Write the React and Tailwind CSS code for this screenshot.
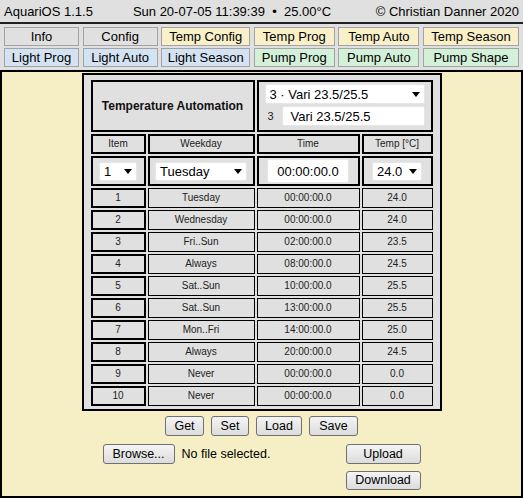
import React from "react";

const navRows = [
  [
    ["Info", "bg-[#e0e0e0]", "w-[75px]"],
    ["Config", "bg-[#e0e0e0]", "w-[75px]"],
    ["Temp Config", "bg-[#f9f0c9]", "w-[89px]"],
    ["Temp Prog", "bg-[#f9f0c9]", "w-[81px]"],
    ["Temp Auto", "bg-[#f9f0c9]", "w-[81px]"],
    ["Temp Season", "bg-[#f9f0c9]", "w-[96px]"],
  ],
  [
    ["Light Prog", "bg-[#d3e3f3]", "w-[75px]"],
    ["Light Auto", "bg-[#d3e3f3]", "w-[75px]"],
    ["Light Season", "bg-[#d3e3f3]", "w-[89px]"],
    ["Pump Prog", "bg-[#d3f1d9]", "w-[81px]"],
    ["Pump Auto", "bg-[#d3f1d9]", "w-[81px]"],
    ["Pump Shape", "bg-[#d3f1d9]", "w-[96px]"],
  ],
];

const rows = [
  ["1", "Tuesday", "00:00:00.0", "24.0"],
  ["2", "Wednesday", "00:00:00.0", "24.0"],
  ["3", "Fri..Sun", "02:00:00.0", "23.5"],
  ["4", "Always", "08:00:00.0", "24.5"],
  ["5", "Sat..Sun", "10:00:00.0", "25.5"],
  ["6", "Sat..Sun", "13:00:00.0", "25.5"],
  ["7", "Mon..Fri", "14:00:00.0", "25.0"],
  ["8", "Always", "20:00:00.0", "24.5"],
  ["9", "Never", "00:00:00.0", "0.0"],
  ["10", "Never", "00:00:00.0", "0.0"],
];

function Arrow() {
  return (
    <svg width="8" height="5" viewBox="0 0 8 5" className="shrink-0">
      <polygon points="0,0 8,0 4,5" fill="#000" />
    </svg>
  );
}

function Select({ text, w }) {
  return (
    <div
      className={`${w} h-[19px] bg-white rounded-[2px] border border-[#e6e6e6] flex items-center justify-between pl-[4px] pr-[4px] text-[13px] leading-none text-black`}
    >
      <span className="whitespace-nowrap">{text}</span>
      <Arrow />
    </div>
  );
}

function Btn({ children, w, h = "h-[20px]" }) {
  return (
    <div
      className={`${w} ${h} rounded-[3px] border border-[#707070] bg-gradient-to-b from-[#f4f4f4] to-[#dcdcdc] flex items-center justify-center text-[12.5px] leading-none text-black`}
    >
      {children}
    </div>
  );
}

export default function App() {
  return (
    <div className="w-[523px] h-[498px] flex flex-col bg-[#e0e0e0] font-['Liberation_Sans',Arial,sans-serif] text-black overflow-hidden">
      {/* Header */}
      <div className="h-[24px] shrink-0 flex items-center px-[4px] border-b-2 border-[#222] text-[13px] leading-none">
        <span>AquariOS 1.1.5</span>
        <span className="ml-[40px] whitespace-pre">Sun 20-07-05 11:39:39  •  25.00°C</span>
        <span className="ml-auto">© Christian Danner 2020</span>
      </div>

      {/* Navigation */}
      <div className="shrink-0 flex flex-col gap-[2px] pt-[3px] pb-[3px] px-[4px]">
        {navRows.map((r, i) => (
          <div key={i} className="flex justify-between">
            {r.map(([label, bg, w]) => (
              <div
                key={label}
                className={`${w} ${bg} h-[19px] border border-[#a3a3a3] flex items-center justify-center text-[13px] leading-none`}
              >
                {label}
              </div>
            ))}
          </div>
        ))}
      </div>

      {/* Content */}
      <div className="flex-1 border-2 border-black bg-[#f6eec4] flex flex-col items-center">
        <div className="mt-[1px] w-[360px] border-2 border-black bg-[#e0e0e0] pt-[5px] pb-[3px] px-[7px] grid grid-cols-[55px_107px_103px_71px] gap-[2px]">
          {/* Title row */}
          <div className="col-span-2 h-[52px] border-2 border-black flex items-center justify-center font-bold text-[12px] text-[#111]">
            Temperature Automation
          </div>
          <div className="col-span-2 h-[52px] border-2 border-black flex flex-col items-center pt-[2px]">
            <Select text="3 · Vari 23.5/25.5" w="w-[160px] h-[20px]" />
            <div className="w-[160px] mt-[2px] flex items-center">
              <span className="w-[17px] pl-[3px] text-[11px] text-[#222]">3</span>
              <div className="w-[143px] h-[20px] bg-white border border-[#e6e6e6] rounded-[2px] flex items-center pl-[8px] text-[13px] leading-none">
                Vari 23.5/25.5
              </div>
            </div>
          </div>

          {/* Column headers */}
          {["Item", "Weekday", "Time", "Temp [°C]"].map((h) => (
            <div
              key={h}
              className="h-[20px] border-2 border-black flex items-center justify-center text-[10px] leading-none text-[#222]"
            >
              {h}
            </div>
          ))}

          {/* Inputs */}
          <div className="h-[30px] border-2 border-black flex items-center justify-center">
            <Select text="1" w="w-[38px]" />
          </div>
          <div className="h-[30px] border-2 border-black flex items-center justify-center">
            <Select text="Tuesday" w="w-[92px]" />
          </div>
          <div className="h-[30px] border-2 border-black flex items-center justify-center">
            <div className="w-[82px] h-[24px] bg-white border border-[#e6e6e6] rounded-[2px] flex items-center justify-center text-[13px] leading-none">
              00:00:00.0
            </div>
          </div>
          <div className="h-[30px] border-2 border-black flex items-center justify-center">
            <Select text="24.0" w="w-[50px]" />
          </div>

          {/* Data rows */}
          {rows.map(([n, d, t, v]) => (
            <React.Fragment key={n}>
              <div className="h-[20px] border-2 border-black flex items-center justify-center text-[10px] leading-none text-[#222]">
                {n}
              </div>
              <div className="h-[20px] border border-black flex items-center justify-center text-[10px] leading-none text-[#222]">
                {d}
              </div>
              <div className="h-[20px] border border-black flex items-center justify-center text-[10px] leading-none text-[#222]">
                {t}
              </div>
              <div className="h-[20px] border border-black flex items-center justify-center text-[10px] leading-none text-[#222]">
                {v}
              </div>
            </React.Fragment>
          ))}
        </div>

        {/* Get/Set/Load/Save */}
        <div className="mt-[5px] flex gap-[7px]">
          <Btn w="w-[39px]">Get</Btn>
          <Btn w="w-[38px]">Set</Btn>
          <Btn w="w-[46px]">Load</Btn>
          <Btn w="w-[49px]">Save</Btn>
        </div>

        {/* File row */}
        <div className="mt-[8px] w-[318px] flex flex-col">
          <div className="flex items-center">
            <Btn w="w-[72px]">Browse...</Btn>
            <span className="ml-[7px] text-[12.5px] leading-none">No file selected.</span>
            <div className="ml-auto">
              <Btn w="w-[75px]">Upload</Btn>
            </div>
          </div>
          <div className="mt-[7px] flex justify-end">
            <Btn w="w-[75px]" h="h-[19px]">Download</Btn>
          </div>
        </div>
      </div>
    </div>
  );
}
